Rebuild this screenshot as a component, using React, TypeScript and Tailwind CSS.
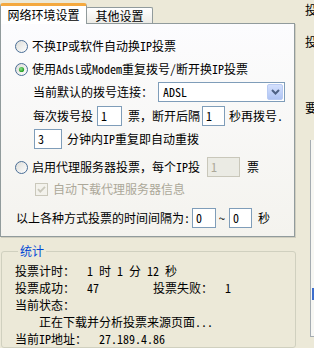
import React from "react";

const FONT = "font-['Noto_Sans_Mono_CJK_SC','Noto_Sans_CJK_SC',sans-serif]";

function Radio({ checked }: { checked?: boolean }) {
  return (
    <svg width="13" height="13" viewBox="0 0 13 13" className="shrink-0">
      <defs>
        <linearGradient id="radioFill" x1="0" y1="0" x2="1" y2="1">
          <stop offset="0" stopColor="#DCDCD7" />
          <stop offset="1" stopColor="#FFFFFF" />
        </linearGradient>
        <radialGradient id="radioDot" cx="0.4" cy="0.4" r="0.6">
          <stop offset="0" stopColor="#8EE48B" />
          <stop offset="1" stopColor="#1F9A1F" />
        </radialGradient>
      </defs>
      <circle cx="6.5" cy="6.5" r="6" fill="url(#radioFill)" stroke="#4A6E96" strokeWidth="1" />
      {checked && <circle cx="6.5" cy="6.5" r="2.6" fill="url(#radioDot)" />}
    </svg>
  );
}

function DisabledCheck() {
  return (
    <svg width="13" height="13" viewBox="0 0 13 13" className="shrink-0">
      <rect x="0.5" y="0.5" width="12" height="12" fill="#F3F2EC" stroke="#CAC8BB" />
      <path d="M3 6.2 L5.3 8.6 L10 3.8" fill="none" stroke="#CAC8BB" strokeWidth="1.8" />
    </svg>
  );
}

function Field({ value, w, disabled }: { value: string; w: string; disabled?: boolean }) {
  return (
    <div
      className={`${w} h-[20px] shrink-0 border border-[#7F9DB9] flex items-center pl-[3px] ${
        disabled ? "bg-[#EBEBE4] text-[#ACA899] border-[#C9C7BA]" : "bg-white"
      }`}
    >
      {value}
    </div>
  );
}

function Select() {
  return (
    <div className="ml-[5px] w-[127px] h-[20px] border border-[#7F9DB9] bg-white flex items-center justify-between">
      <span className="pl-[4px]">ADSL</span>
      <div className="w-[16px] h-[16px] mr-[1px] rounded-[2px] border border-[#B9CBF3] bg-linear-to-b from-[#D4E0FD] to-[#AFC4F4] flex items-center justify-center">
        <svg width="9" height="6" viewBox="0 0 9 6">
          <path d="M1 1 L4.5 4.5 L8 1" fill="none" stroke="#4D6185" strokeWidth="2" />
        </svg>
      </div>
    </div>
  );
}

export default function App() {
  return (
    <div
      className={`w-[314px] h-[348px] overflow-hidden bg-[#ECE9D8] flex text-[12px] leading-[14px] text-black ${FONT}`}
    >
      <div className="w-[296px] shrink-0 flex flex-col">
        {/* Tabs */}
        <div className="h-[24px] flex items-end relative z-10">
          <div className="h-[21px] -mb-px w-[87px] bg-white border-x border-[#919B9C] border-t-[3px] border-t-[#F4A93F] rounded-t-[3px] flex items-center justify-center">
            网络环境设置
          </div>
          <div className="h-[16px] w-[67px] -ml-px border border-b-0 border-[#919B9C] rounded-t-[2px] bg-linear-to-b from-white to-[#ECEBE6] flex items-center justify-center pt-px">
            其他设置
          </div>
        </div>

        {/* Tab page */}
        <div className="h-[219px] w-[295px] border border-[#919B9C] bg-linear-to-b from-[#FCFCFE] to-[#F4F3EE] shadow-[1px_1px_0_#D0CEBF] flex flex-col">
          <div className="mt-[12px] h-[20px] flex items-center pl-[14px] gap-[4px]">
            <Radio />
            <span>不换IP或软件自动换IP投票</span>
          </div>
          <div className="mt-[3px] h-[20px] flex items-center pl-[14px] gap-[4px]">
            <Radio checked />
            <span>使用Adsl或Modem重复拨号/断开换IP投票</span>
          </div>
          <div className="mt-[3px] h-[20px] flex items-center pl-[32px]">
            <span>当前默认的拨号连接：</span>
            <Select />
          </div>
          <div className="mt-[4px] h-[20px] flex items-center pl-[32px]">
            <span>每次拨号投</span>
            <div className="ml-[4px]">
              <Field value="1" w="w-[25px]" />
            </div>
            <span className="ml-[6px]">票，断开后隔</span>
            <div className="ml-[2px]">
              <Field value="1" w="w-[23px]" />
            </div>
            <span className="ml-[4px]">秒再拨号.</span>
          </div>
          <div className="mt-[3px] h-[20px] flex items-center pl-[33px]">
            <Field value="3" w="w-[28px]" />
            <span className="ml-[5px]">分钟内IP重复即自动重拨</span>
          </div>
          <div className="mt-[8px] h-[20px] flex items-center pl-[14px]">
            <Radio />
            <span className="ml-[4px]">启用代理服务器投票，每个IP投</span>
            <div className="ml-[7px]">
              <Field value="1" w="w-[33px]" disabled />
            </div>
            <span className="ml-[7px]">票</span>
          </div>
          <div className="mt-[3px] h-[18px] flex items-center pl-[34px]">
            <DisabledCheck />
            <span className="ml-[5px] text-[#ACA899]">自动下载代理服务器信息</span>
          </div>
          <div className="mt-[9px] h-[21px] flex items-center pl-[15px]">
            <span>以上各种方式投票的时间间隔为:</span>
            <div className="ml-[2px]">
              <Field value="0" w="w-[24px]" />
            </div>
            <span className="ml-[3px]">~</span>
            <div className="ml-[4px]">
              <Field value="0" w="w-[23px]" />
            </div>
            <span className="ml-[6px]">秒</span>
          </div>
        </div>

        {/* Statistics group */}
        <fieldset className="mt-[7px] ml-[1px] w-[295px] flex-1 border border-[#D0D0BF] rounded-[3px] pl-[13px] pt-[4px] leading-[17px] whitespace-pre">
          <legend className="ml-[3px] px-[2px] leading-[14px] text-[#0046D5]">统计</legend>
          <div>投票计时：  1 时 1 分 12 秒</div>
          <div>投票成功：  47         投票失败：  1</div>
          <div>当前状态：</div>
          <div>    正在下载并分析投票来源页面...</div>
          <div>当前IP地址：  27.189.4.86</div>
        </fieldset>
      </div>

      {/* Clipped neighbouring column */}
      <div className="w-[18px] shrink-0 flex flex-col overflow-hidden">
        <span className="mt-[3px] ml-[9px] whitespace-nowrap">投</span>
        <span className="mt-[18px] ml-[9px] whitespace-nowrap">投</span>
        <span className="mt-[52px] ml-[9px] whitespace-nowrap">要</span>
        <div className="mt-[25px] ml-[14px] h-[197px] border-l border-b border-[#A5ACB2] bg-[#F7F7F3] flex flex-col">
          <div className="mt-[148px] h-[12px] ml-[1px] bg-[#3D6ECC]" />
        </div>
      </div>
    </div>
  );
}
